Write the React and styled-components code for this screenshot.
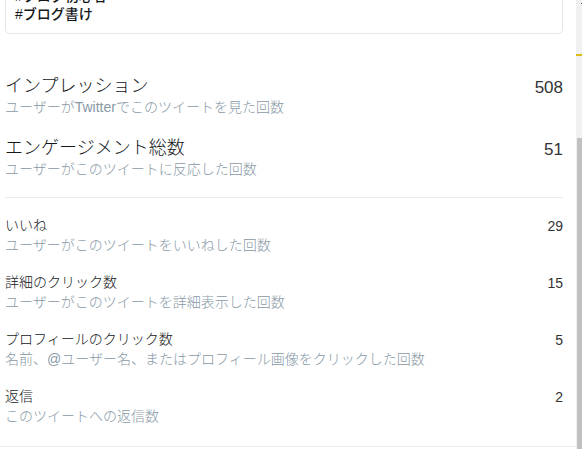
import React from 'react';
import styled, { createGlobalStyle } from 'styled-components';

const GlobalStyle = createGlobalStyle`
  html, body {
    margin: 0;
    padding: 0;
    background: #ffffff;
    overflow: hidden;
  }
  body {
    font-family: 'Liberation Sans', 'Noto Sans CJK JP', sans-serif;
    color: #14171a;
  }
`;

const topMetrics = [
  { key: 'imp', title: 'インプレッション', desc: 'ユーザーがTwitterでこのツイートを見た回数', value: 508 },
  { key: 'eng', title: 'エンゲージメント総数', desc: 'ユーザーがこのツイートに反応した回数', value: 51 },
];

const detailMetrics = [
  { key: 'like', title: 'いいね', desc: 'ユーザーがこのツイートをいいねした回数', value: 29 },
  { key: 'detail', title: '詳細のクリック数', desc: 'ユーザーがこのツイートを詳細表示した回数', value: 15 },
  { key: 'profile', title: 'プロフィールのクリック数', desc: '名前、@ユーザー名、またはプロフィール画像をクリックした回数', value: 5 },
  { key: 'reply', title: '返信', desc: 'このツイートへの返信数', value: 2 },
];

const App = () => (
  <Frame>
    <GlobalStyle />
    <Main>
      <Content>
        <TweetCard>
          <TweetLine>#ブログ初心者</TweetLine>
          <TweetLine>#ブログ書け</TweetLine>
        </TweetCard>
        <TopSection>
          {topMetrics.map((m) => (
            <MetricRow key={m.key}>
              <MetricText>
                <Title $large>{m.title}</Title>
                <Desc $large>{m.desc}</Desc>
              </MetricText>
              <Value $large>{m.value}</Value>
            </MetricRow>
          ))}
        </TopSection>
        <DetailSection>
          {detailMetrics.map((m) => (
            <MetricRow key={m.key}>
              <MetricText>
                <Title>{m.title}</Title>
                <Desc>{m.desc}</Desc>
              </MetricText>
              <Value>{m.value}</Value>
            </MetricRow>
          ))}
        </DetailSection>
      </Content>
      <BottomRule />
    </Main>
    <Scrollbar>
      <ArrowDot />
      <Marker />
      <Thumb />
    </Scrollbar>
  </Frame>
);

const Frame = styled.div`
  display: flex;
  width: 582px;
  height: 449px;
  overflow: hidden;
`;

const Main = styled.div`
  flex: 1;
  display: flex;
  flex-direction: column;
`;

const Content = styled.div`
  padding: 0 13px 0 5px;
`;

const TweetCard = styled.div`
  margin-top: -24px;
  padding: 10px 14px 10px 9px;
  border: 1px solid #e1e8ed;
  border-radius: 5px;
`;

const TweetLine = styled.div`
  font-size: 14px;
  line-height: 18px;
  color: #14171a;
  font-weight: 500;
`;

const TopSection = styled.div`
  display: flex;
  flex-direction: column;
  gap: 20px;
  padding: 40px 0 19px;
  border-bottom: 1px solid #e6ecf0;
`;

const DetailSection = styled.div`
  display: flex;
  flex-direction: column;
  gap: 17px;
  padding: 17px 0 0;
`;

const MetricRow = styled.div`
  display: flex;
  align-items: baseline;
  justify-content: space-between;
`;

const MetricText = styled.div`
  display: flex;
  flex-direction: column;
`;

const Title = styled.div`
  font-size: ${(p) => (p.$large ? '18px' : '14px')};
  line-height: ${(p) => (p.$large ? '24px' : '20px')};
  font-weight: 300;
  color: #14171a;
`;

const Desc = styled.div`
  font-size: 14px;
  line-height: ${(p) => (p.$large ? '18px' : '20px')};
  font-weight: 300;
  color: #8899a6;
`;

const Value = styled.div`
  font-family: 'Liberation Sans', Arial, sans-serif;
  font-size: ${(p) => (p.$large ? '17px' : '14px')};
  color: #333;
  transform: translateY(1px);
`;

const BottomRule = styled.div`
  margin-top: auto;
  margin-bottom: 2px;
  height: 1px;
  background: #e6ecf0;
`;

const Scrollbar = styled.div`
  width: 6px;
  background: #f1f1f1;
  display: flex;
  flex-direction: column;
  align-items: flex-end;
`;

const ArrowDot = styled.div`
  width: 1px;
  height: 1px;
  margin-top: 3px;
  background: #505050;
`;

const Marker = styled.div`
  align-self: stretch;
  height: 2px;
  margin-top: 50px;
  background: #d8bf1a;
`;

const Thumb = styled.div`
  width: 5px;
  margin-top: 82px;
  flex: 1;
  background: #c1c1c1;
`;

export default App;
